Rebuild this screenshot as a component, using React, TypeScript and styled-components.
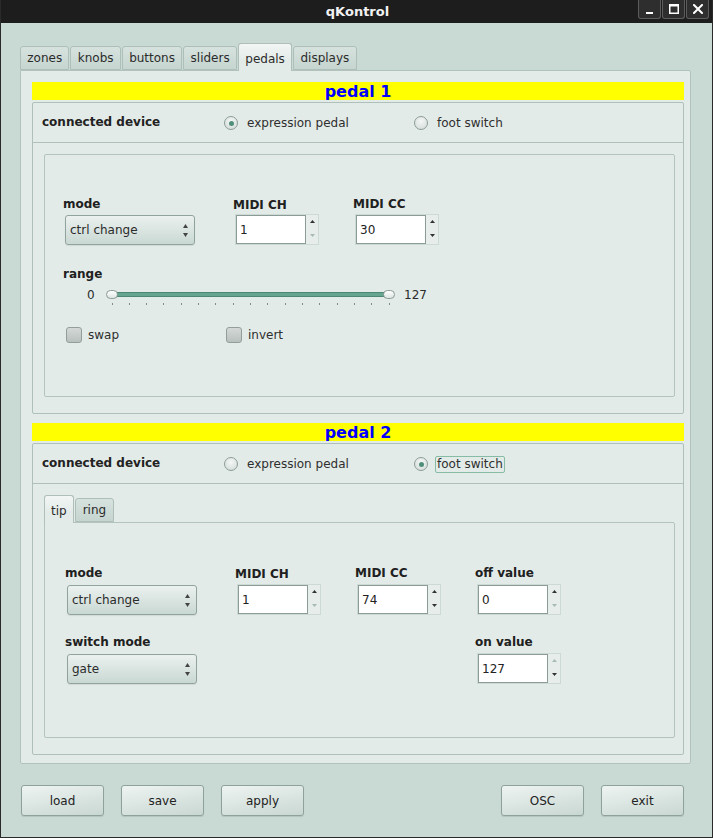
import React from 'react';
import styled, { createGlobalStyle } from 'styled-components';

const Global = createGlobalStyle`
  html, body { margin: 0; padding: 0; background: #c9d9d4; }
  body { font-family: "DejaVu Sans", "Liberation Sans", sans-serif; font-size: 12px; color: #2b2b2b; }
  * { box-sizing: border-box; }
`;

const Window = styled.div`
  width: 713px;
  height: 838px;
  display: flex;
  flex-direction: column;
  background: #c9d9d4;
  border: 1px solid #2a2a2a;
  border-top: none;
`;

const TitleBar = styled.header`
  height: 23px;
  flex: none;
  display: grid;
  grid-template-columns: 1fr auto 1fr;
  background: #1d1d1d;
`;

const Title = styled.div`
  grid-column: 2;
  color: #f2f2f2;
  font-weight: bold;
  font-size: 13px;
  line-height: 24px;
  padding-left: 2px;
`;

const WinButtons = styled.div`
  grid-column: 3;
  justify-self: end;
  align-self: start;
  display: flex;
  gap: 1px;
  padding-right: 3px;
`;

const WinButton = styled.div`
  width: 23px;
  height: 19px;
  background: #2e2e2e;
  border: 1px solid #5c5c5c;
  border-top: none;
  border-radius: 0 0 3px 3px;
  display: flex;
  align-items: center;
  justify-content: center;
`;

const Body = styled.main`
  flex: 1;
  display: flex;
  flex-direction: column;
  align-items: flex-start;
  padding: 20px 0 0 19px;
`;

const TabBar = styled.div`
  display: flex;
  align-items: flex-end;
  gap: 1px;
  height: 27px;
  flex: none;
`;

const Tab = styled.div<{ $active?: boolean; $pad?: number }>`
  position: relative;
  z-index: ${p => (p.$active ? 2 : 1)};
  height: ${p => (p.$active ? 28 : 24)}px;
  margin-bottom: ${p => (p.$active ? -1 : 0)}px;
  padding: ${p => (p.$active ? 2 : 0)}px ${p => p.$pad ?? 6.3}px 0;
  display: flex;
  align-items: center;
  border: 1px solid #aebfba;
  border-bottom: ${p => (p.$active ? 'none' : '1px solid #aebfba')};
  border-radius: 3px 3px 0 0;
  background: ${p =>
    p.$active
      ? 'linear-gradient(#f2f6f4, #e3ebe8 60%)'
      : 'linear-gradient(#d6e2de, #c6d5d0)'};
  color: #2b2b2b;
  font-size: 12px;
  white-space: nowrap;
`;

const Pane = styled.section`
  width: 671px;
  height: 694px;
  border: 1px solid #b2c2bd;
  border-radius: 0 2px 2px 2px;
  background: #e3ebe8;
  padding: 11px 6px 0 11px;
  display: flex;
  flex-direction: column;
  gap: 9px;
`;

const PedalBlock = styled.div`
  display: flex;
  flex-direction: column;
`;

const YellowBar = styled.div`
  height: 18px;
  background: #ffff00;
  color: #0000ff;
  font-weight: bold;
  font-size: 16px;
  line-height: 19px;
  text-align: center;
  margin-bottom: 2px;
`;

const Group = styled.div`
  border: 1px solid #afbfba;
  border-radius: 2px;
  display: flex;
  flex-direction: column;
`;

const HeaderRow = styled.div`
  height: 40px;
  border-bottom: 1px solid #afbfba;
  display: flex;
  align-items: center;
  padding-left: 9px;
`;

const HeaderLabel = styled.div`
  width: 182px;
  font-weight: bold;
  color: #222;
  line-height: 14px;
  margin-top: -2px;
`;

const RadioItem = styled.div<{ $w?: number }>`
  display: flex;
  align-items: center;
  width: ${p => (p.$w ? `${p.$w}px` : 'auto')};
  margin-top: 1px;
`;

const RadioCircle = styled.span<{ $on?: boolean }>`
  width: 14px;
  height: 14px;
  flex: none;
  border-radius: 50%;
  border: 1px solid #8d9c97;
  background: radial-gradient(circle at 50% 35%, #f4f7f6, #cfd9d6);
  display: flex;
  align-items: center;
  justify-content: center;
  &::after {
    content: '';
    width: 5px;
    height: 5px;
    border-radius: 50%;
    background: #4f8e79;
    display: ${p => (p.$on ? 'block' : 'none')};
  }
`;

const RadioText = styled.span<{ $focus?: boolean }>`
  margin-left: 7px;
  border: 1px solid ${p => (p.$focus ? '#86bca6' : 'transparent')};
  border-radius: 2px;
  line-height: 15px;
  padding: 0 1px 0 1px;
  color: #2e2e2e;
`;

const Lower = styled.div`
  height: 270px;
  padding: 11px 8px 16px 11px;
  display: flex;
  flex-direction: column;
`;

const Frame = styled.div<{ $padTop: number; $padLeft: number; $tabbed?: boolean }>`
  flex: 1;
  border: 1px solid #b3c3be;
  border-radius: ${p => (p.$tabbed ? '0 2px 2px 2px' : '2px')};
  background: #e3ebe8;
  padding: ${p => p.$padTop}px 0 0 ${p => p.$padLeft}px;
  display: flex;
  flex-direction: column;
  align-items: flex-start;
`;

const InnerTabs = styled.div`
  flex: 1;
  display: flex;
  flex-direction: column;
`;

const FieldGrid = styled.div<{ $cols: number }>`
  display: grid;
  grid-template-columns: ${p => ['170px', '120px', '120px', '120px'].slice(0, p.$cols).join(' ')};
  row-gap: 20px;
  align-items: start;
`;

const Field = styled.div<{ $col?: number }>`
  display: flex;
  flex-direction: column;
  gap: 5px;
  grid-column: ${p => p.$col ?? 'auto'};
`;

const Label = styled.div<{ $drop?: number }>`
  font-weight: bold;
  line-height: 14px;
  color: #202020;
  position: relative;
  top: ${p => p.$drop ?? 1}px;
`;

const Combo = styled.div`
  width: 130px;
  height: 30px;
  margin-left: 2px;
  border: 1px solid #91a39d;
  border-radius: 3px;
  background: linear-gradient(#ebf1ef, #c9d8d3);
  box-shadow: 0 1px 1px rgba(0, 0, 0, 0.08);
  display: flex;
  align-items: center;
  justify-content: space-between;
  padding: 0 6px 0 4px;
  color: #2b2b2b;
`;

const SpinBox = styled.div`
  width: 84px;
  height: 31px;
  margin-left: 2px;
  margin-top: -1px;
  border: 1px solid #cdd9d5;
  background: #e6edea;
  display: flex;
`;

const SpinField = styled.div`
  flex: 1;
  background: #ffffff;
  border: 1px solid #8b9c96;
  padding-left: 3px;
  display: flex;
  align-items: center;
  color: #222;
`;

const SpinArrows = styled.div`
  width: 12px;
  display: flex;
  flex-direction: column;
  align-items: center;
  justify-content: space-between;
  padding: 5px 0 7px;
`;

const RangeLabel = styled.div`
  font-weight: bold;
  line-height: 14px;
  color: #202020;
  margin-top: 22px;
`;

const SliderRow = styled.div`
  margin-top: 6px;
  padding-left: 24px;
  display: flex;
  align-items: flex-start;
`;

const SliderValue = styled.span<{ $w?: number }>`
  line-height: 16px;
  width: ${p => (p.$w ? `${p.$w}px` : 'auto')};
  color: #2b2b2b;
`;

const SliderTrackArea = styled.div`
  position: relative;
  width: 289px;
  height: 20px;
  margin: 0 9px 0 11px;
`;

const Track = styled.div`
  position: absolute;
  left: 6px;
  top: 5px;
  width: 277px;
  height: 5px;
  background: #66a690;
  border: 1px solid #4d8873;
  border-radius: 2px;
`;

const Handle = styled.div`
  position: absolute;
  top: 3px;
  width: 12px;
  height: 9px;
  border-radius: 5px;
  border: 1px solid #8b9b96;
  background: linear-gradient(#ffffff, #dde5e2);
`;

const Ticks = styled.svg`
  position: absolute;
  left: 0;
  top: 16px;
`;

const CheckRow = styled.div`
  margin-top: 20px;
  margin-left: 3px;
  display: flex;
`;

const CheckItem = styled.div<{ $w?: number }>`
  display: flex;
  align-items: center;
  width: ${p => (p.$w ? `${p.$w}px` : 'auto')};
`;

const CheckBox = styled.span`
  width: 16px;
  height: 16px;
  border: 1px solid #939e9a;
  border-radius: 3px;
  background: linear-gradient(#d4d9d7, #b9c1be);
`;

const CheckText = styled.span`
  margin-left: 6px;
  color: #2e2e2e;
`;

const ButtonRow = styled.div`
  width: 100%;
  margin-top: 21px;
  padding: 0 28px 0 1px;
  display: flex;
  gap: 17px;
`;

const Spacer = styled.div`
  flex: 1;
`;

const Button = styled.button`
  width: 83px;
  height: 31px;
  border: 1px solid #8fa19b;
  border-radius: 3px;
  background: linear-gradient(170deg, #eef4f2, #d9e4e0 55%, #c9d7d2);
  box-shadow: 0 1px 1px rgba(0, 0, 0, 0.1);
  font-family: "DejaVu Sans", "Liberation Sans", sans-serif;
  font-size: 12px;
  color: #222;
  padding: 0;
`;

const ComboArrows = () => (
  <svg width="5" height="13" viewBox="0 0 5 13">
    <polygon points="2.5,0 5,4 0,4" fill="#444" />
    <polygon points="0,9 5,9 2.5,13" fill="#444" />
  </svg>
);

const Arrow = ({ up, disabled }: { up?: boolean; disabled?: boolean }) => (
  <svg width="5" height="3" viewBox="0 0 5 3">
    <polygon points={up ? '2.5,0 5,3 0,3' : '0,0 5,0 2.5,3'} fill={disabled ? '#a8bab4' : '#333'} />
  </svg>
);

const Spin = ({ value, upOff, downOff }: { value: string; upOff?: boolean; downOff?: boolean }) => (
  <SpinBox>
    <SpinField>{value}</SpinField>
    <SpinArrows>
      <Arrow up disabled={upOff} />
      <Arrow disabled={downOff} />
    </SpinArrows>
  </SpinBox>
);

const ComboBox = ({ value }: { value: string }) => (
  <Combo>
    <span>{value}</span>
    <ComboArrows />
  </Combo>
);

const Header = ({ foot }: { foot?: boolean }) => (
  <HeaderRow>
    <HeaderLabel>connected device</HeaderLabel>
    <RadioItem $w={190}>
      <RadioCircle $on={!foot} />
      <RadioText>expression pedal</RadioText>
    </RadioItem>
    <RadioItem>
      <RadioCircle $on={foot} />
      <RadioText $focus={foot}>foot switch</RadioText>
    </RadioItem>
  </HeaderRow>
);

const tabs = ['zones', 'knobs', 'buttons', 'sliders', 'pedals', 'displays'];

export default function App() {
  const tickXs = Array.from({ length: 17 }, (_, i) => 5.5 + i * 17.33);
  return (
    <>
      <Global />
      <Window>
        <TitleBar>
          <Title>qKontrol</Title>
          <WinButtons>
            <WinButton>
              <svg width="8" height="14" viewBox="0 0 8 14">
                <rect x="0" y="10" width="7" height="2" fill="#fff" />
              </svg>
            </WinButton>
            <WinButton>
              <svg width="10" height="10" viewBox="0 0 10 10">
                <rect x="0.75" y="0.75" width="8.5" height="8.5" fill="none" stroke="#fff" strokeWidth="1.5" />
                <rect x="0" y="0" width="10" height="2.5" fill="#fff" />
              </svg>
            </WinButton>
            <WinButton>
              <svg width="10" height="10" viewBox="0 0 10 10">
                <path d="M1 1 L9 9 M9 1 L1 9" stroke="#fff" strokeWidth="2" strokeLinecap="square" />
              </svg>
            </WinButton>
          </WinButtons>
        </TitleBar>
        <Body>
          <TabBar>
            {tabs.map(t => (
              <Tab key={t} $active={t === 'pedals'}>
                {t}
              </Tab>
            ))}
          </TabBar>
          <Pane>
            <PedalBlock>
              <YellowBar>pedal 1</YellowBar>
              <Group>
                <Header />
                <Lower>
                  <Frame $padTop={41} $padLeft={18}>
                    <FieldGrid $cols={3}>
                      <Field>
                        <Label>mode</Label>
                        <ComboBox value="ctrl change" />
                      </Field>
                      <Field>
                        <Label $drop={2}>MIDI CH</Label>
                        <Spin value="1" downOff />
                      </Field>
                      <Field>
                        <Label>MIDI CC</Label>
                        <Spin value="30" />
                      </Field>
                    </FieldGrid>
                    <RangeLabel>range</RangeLabel>
                    <SliderRow>
                      <SliderValue $w={8}>0</SliderValue>
                      <SliderTrackArea>
                        <Track />
                        <Handle style={{ left: 0 }} />
                        <Handle style={{ left: 277 }} />
                        <Ticks width="289" height="3" viewBox="0 0 289 3">
                          {tickXs.map(x => (
                            <rect key={x} x={Math.round(x)} y="0" width="1" height="2" fill="#7f8c88" />
                          ))}
                        </Ticks>
                      </SliderTrackArea>
                      <SliderValue>127</SliderValue>
                    </SliderRow>
                    <CheckRow>
                      <CheckItem $w={160}>
                        <CheckBox />
                        <CheckText>swap</CheckText>
                      </CheckItem>
                      <CheckItem>
                        <CheckBox />
                        <CheckText>invert</CheckText>
                      </CheckItem>
                    </CheckRow>
                  </Frame>
                </Lower>
              </Group>
            </PedalBlock>

            <PedalBlock>
              <YellowBar>pedal 2</YellowBar>
              <Group>
                <Header foot />
                <Lower>
                  <InnerTabs>
                    <TabBar>
                      <Tab $active $pad={6}>tip</Tab>
                      <Tab $pad={7}>ring</Tab>
                    </TabBar>
                    <Frame $padTop={43} $padLeft={20} $tabbed>
                      <FieldGrid $cols={4}>
                        <Field>
                          <Label $drop={0}>mode</Label>
                          <ComboBox value="ctrl change" />
                        </Field>
                        <Field>
                          <Label>MIDI CH</Label>
                          <Spin value="1" downOff />
                        </Field>
                        <Field>
                          <Label $drop={0}>MIDI CC</Label>
                          <Spin value="74" />
                        </Field>
                        <Field>
                          <Label $drop={0}>off value</Label>
                          <Spin value="0" downOff />
                        </Field>
                        <Field $col={1}>
                          <Label $drop={0}>switch mode</Label>
                          <ComboBox value="gate" />
                        </Field>
                        <Field $col={4}>
                          <Label $drop={0}>on value</Label>
                          <Spin value="127" upOff />
                        </Field>
                      </FieldGrid>
                    </Frame>
                  </InnerTabs>
                </Lower>
              </Group>
            </PedalBlock>
          </Pane>
          <ButtonRow>
            <Button>load</Button>
            <Button>save</Button>
            <Button>apply</Button>
            <Spacer />
            <Button>OSC</Button>
            <Button>exit</Button>
          </ButtonRow>
        </Body>
      </Window>
    </>
  );
}
